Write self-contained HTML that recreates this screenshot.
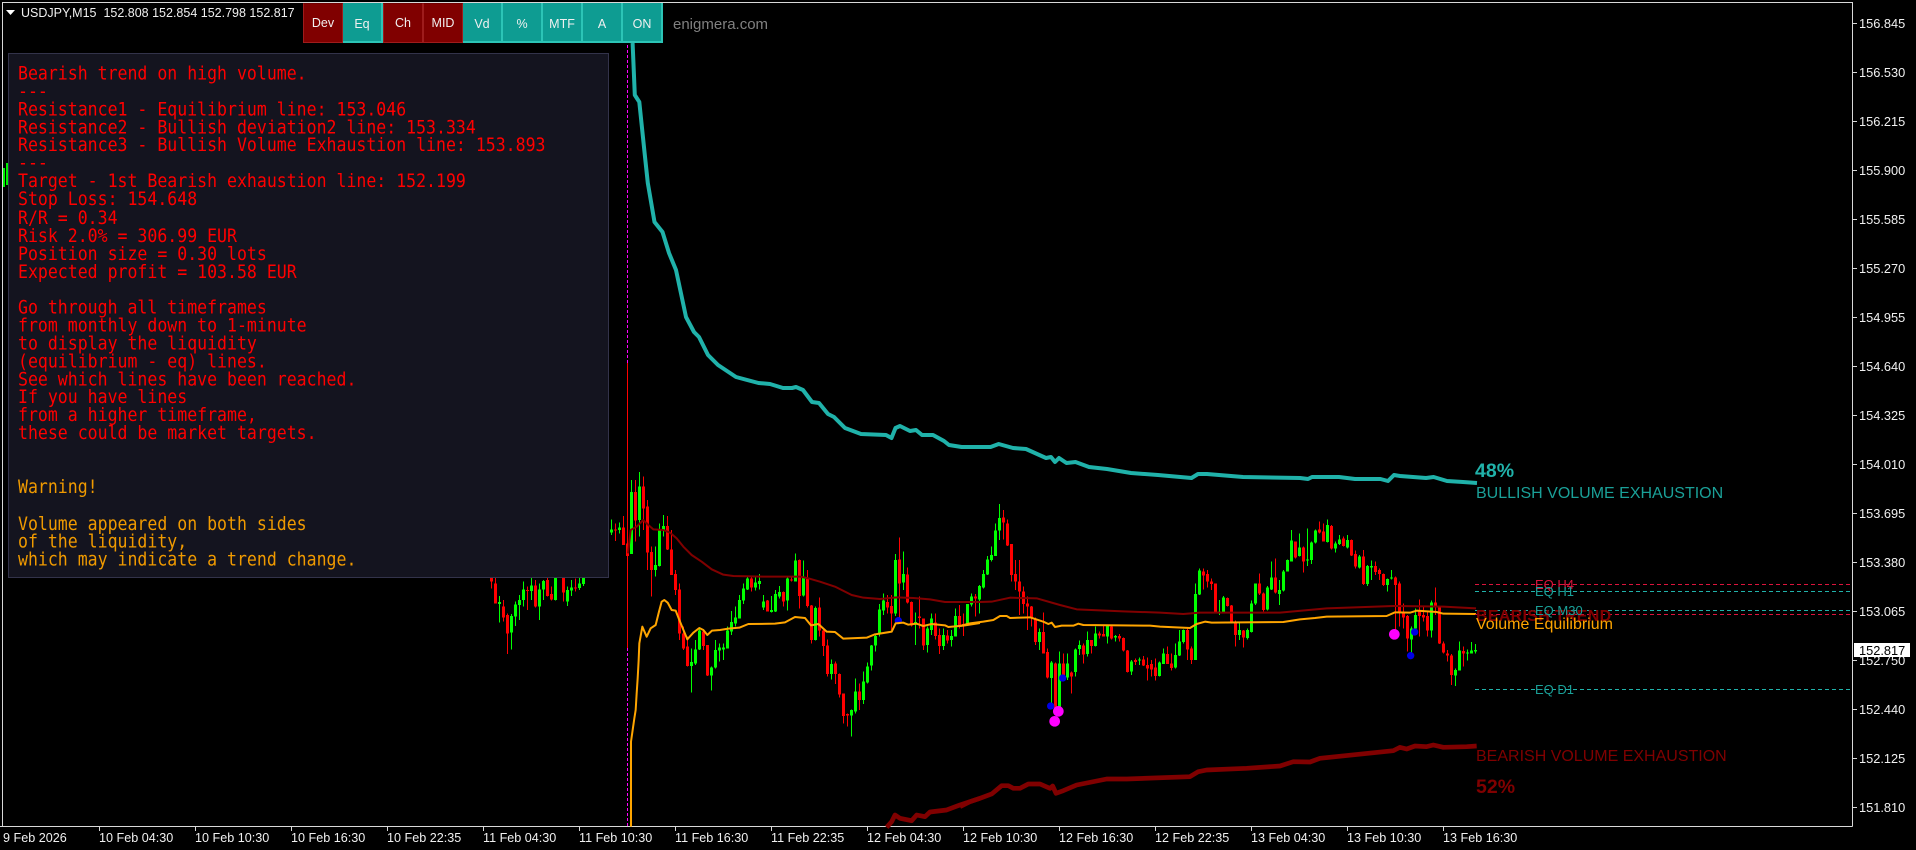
<!DOCTYPE html>
<html lang="en">
<head>
<meta charset="utf-8">
<title>USDJPY,M15</title>
<style>
html,body{margin:0;padding:0;background:#000;width:1916px;height:850px;overflow:hidden}
svg{position:absolute;left:0;top:0;display:block}
text{font-family:"Liberation Sans",Arial,sans-serif}
.ax{font-size:12.8px;fill:#f0f0f0}
.tm{font-size:12.6px;fill:#f0f0f0}
.panel{position:absolute;left:8px;top:53px;width:599px;height:523px;background:#14141f;border:1px solid #33334a;box-sizing:content-box}
.panel pre{position:absolute;left:9px;top:11px;margin:0;font:16.55px/16.07px "DejaVu Sans Mono","Liberation Mono",monospace;color:#f00;white-space:pre;transform:scaleY(1.12);transform-origin:0 0}
.panel span{color:#f09a00}
.b{position:absolute;top:3px;height:40px;width:40px;box-sizing:border-box;font:12.5px/40px "Liberation Sans",Arial,sans-serif;color:#f0f0f0;text-align:center}
.r{background:#800000;border:1px solid #9e1c1c;border-top-color:#6d0000;line-height:39px}
.g{background:#0e9c92;border-right:2px solid #2cc4b6;border-bottom:2px solid #2cc4b6;line-height:42px}
</style>
</head>
<body>
<svg width="1916" height="850" viewBox="0 0 1916 850">
<!-- frame -->
<path d="M2.5 826.5V2.5H1852.5V826.5M0 826.5H1852.5" fill="none" stroke="#d8d8d8" stroke-width="1" shape-rendering="crispEdges"/>
<!-- stub candles at the far left -->
<path d="M4 168V187M7 163V185" stroke="#0e0" stroke-width="2" shape-rendering="crispEdges"/>
<!-- vertical session line -->
<path d="M627.5 45V363M627.5 648V826" stroke="#f0f" stroke-width="1" stroke-dasharray="3 2" shape-rendering="crispEdges"/>
<path d="M627.5 363V648" stroke="#f00" stroke-width="1" shape-rendering="crispEdges"/>

<!-- candles zone A (3x coords, origin 480,480) -->
<g transform="translate(480.1667,480) scale(.33333)" shape-rendering="crispEdges" fill="none">
<path stroke="#f00" stroke-width="3" d="M34 290V325M46 290V370M70 360V425M82 400V522M142 320V390M166 300V382M202 290V350M214 320V362M250 290V365M286 295V335M406 130V183M430 108V195M442 190V228M466 0V185M490 -10V150M502 60V270M514 200V350M562 108V210M574 150V285M586 270V345M598 310V480M610 440V510M622 470V560M670 452V510M682 495V588M814 290V335M862 360V395M910 335V380M934 290V305M958 238V385M982 270V382M994 375V490M1018 352V470M1030 450V528M1042 478V590M1066 545V612M1078 580V652M1090 640V730M1102 700V740M1138 610V690M1222 345V400M1234 345V450M1258 172V415M1282 262V370M1294 365V440M1318 350V445M1330 415V510M1366 400V478M1378 445V522M1402 450V490M1438 375V445M1450 400V468M1486 342V410"/>
<path stroke="#f00" stroke-width="9" d="M34 290V305M46 310V370M70 380V412M82 405V460M142 330V333M166 316V380M202 300V348M214 342V358M250 291V338M286 322V326M406 148V151M430 142V195M442 190V228M466 36V122M490 20V85M502 80V218M514 216V270M562 138V208M574 208V285M586 282V330M598 328V460M610 460V505M622 500V558M670 455V498M682 495V586M814 295V322M862 362V395M910 336V364M934 298V302M958 240V348M982 296V378M994 376V480M1018 382V452M1030 452V498M1042 496V582M1066 550V582M1078 582V644M1090 640V708M1102 702V706M1138 634V660M1222 366V382M1234 378V400M1258 238V310M1282 283V368M1294 366V436M1318 410V414M1330 416V496M1366 428V468M1378 465V498M1402 467V482M1438 408V438M1450 432V436M1486 350V355"/>
<path stroke="#0f0" stroke-width="3" d="M58 348V428M94 402V508M106 365V438M118 345V420M130 305V380M154 290V360M178 310V420M190 300V360M226 290V362M262 320V378M274 300V348M298 290V330M310 290V318M394 118V165M418 128V160M454 0V222M478 -24V170M526 200V290M538 130V260M550 105V170M634 505V638M646 480V555M658 442V510M694 560V632M706 480V565M718 490V545M730 490V540M742 440V505M754 393V465M766 380V440M778 345V415M790 310V372M802 290V330M826 290V332M838 282V328M850 345V390M874 348V398M886 330V396M898 318V355M922 292V392M946 220V305M970 242V350M1006 380V482M1054 538V598M1114 688V770M1126 595V700M1150 575V672M1162 548V610M1174 495V572M1186 460V515M1198 372V470M1210 340V405M1246 222V408M1270 215V330M1306 398V495M1342 440V518M1354 400V465M1390 445V510M1414 450V500M1426 385V470M1462 372V435M1474 340V380M1498 315V400"/>
<path stroke="#0f0" stroke-width="9" d="M58 366V372M94 408V458M106 373V410M118 360V375M130 328V360M154 316V333M178 328V380M190 303V328M226 291V360M262 330V365M274 322V332M298 310V324M310 292V312M394 148V158M418 142V150M454 36V222M478 20V120M526 255V270M538 152V258M550 138V150M634 546V558M646 508V550M658 452V508M694 562V586M706 510V563M718 503V512M730 502V508M742 452V505M754 426V455M766 412V430M778 360V415M790 326V362M802 296V328M826 308V322M838 303V312M850 365V383M874 390V396M886 342V394M898 336V350M922 296V362M946 242V305M970 290V346M1006 384V480M1054 552V582M1114 690V707M1126 634V694M1150 604V660M1162 560V608M1174 496V556M1186 468V496M1198 388V462M1210 362V392M1246 240V400M1270 282V308M1306 426V434M1342 445V495M1354 415V450M1390 465V498M1414 468V480M1426 408V470M1462 372V433M1474 350V374M1498 318V358"/>
</g>
<!-- candles zone B (3x coords, origin 960,480) -->
<g transform="translate(960.1667,480) scale(.33333)" shape-rendering="crispEdges" fill="none">
<path stroke="#f00" stroke-width="3" d="M130 90V178M142 118V198M154 192V305M166 240V330M178 240V405M190 320V400M202 350V450M214 378V440M226 412V495M250 398V520M262 505V595M286 548V695M310 520V600M334 575V640M370 490V550M394 480V520M418 455V475M430 438V470M454 438V478M478 462V485M490 473V515M502 510V578M526 535V555M550 528V558M562 532V602M574 540V590M586 535V602M622 500V552M634 520V572M682 445V540M694 500V552M730 265V328M742 270V322M754 295V330M766 310V400M802 352V380M814 375V430M826 422V500M850 450V503M898 280V345M910 338V395M946 235V340M1006 185V235M1030 200V278M1078 125V160M1090 130V185M1114 135V208M1150 170V200M1174 178V228M1186 212V265M1210 210V315M1246 245V285M1258 265V300M1270 280V318M1306 290V450M1318 305V440M1330 370V445M1342 405V515M1378 358V470M1390 380V425M1402 395V470M1426 322V405M1438 378V492M1450 485V520M1462 510V545M1474 522V615M1510 500V560"/>
<path stroke="#f00" stroke-width="9" d="M130 112V128M142 130V196M154 192V285M166 282V305M178 304V335M190 334V372M202 370V380M214 380V412M226 415V486M250 456V520M262 516V593M286 550V690M310 550V590M334 578V590M370 497V524M394 480V498M418 460V466M430 462V470M454 440V476M478 468V476M490 474V512M502 511V576M526 540V546M550 538V556M562 555V566M574 552V568M586 562V588M622 522V552M634 550V564M682 450V508M694 505V540M730 274V286M742 282V305M754 304V312M766 310V396M802 354V378M814 376V428M826 424V465M850 452V472M898 310V340M910 340V390M946 292V338M1006 184V232M1030 202V245M1078 148V158M1090 155V185M1114 138V206M1150 175V198M1174 180V226M1186 222V260M1210 230V312M1246 258V276M1258 270V282M1270 282V315M1306 292V315M1318 310V395M1330 395V412M1342 408V476M1378 395V408M1390 405V412M1402 408V452M1426 368V378M1438 378V490M1450 490V518M1462 520V526M1474 526V585M1510 513V520"/>
<path stroke="#0f0" stroke-width="3" d="M70 270V325M82 228V285M94 200V245M106 130V228M118 72V180M238 445V510M274 543V670M298 515V695M322 520V600M346 506V590M358 482V525M382 455V530M406 440V500M442 435V490M466 465V485M514 540V585M538 532V555M598 545V590M610 505V552M646 490V565M658 450V528M670 448V490M706 310V540M718 265V345M778 360V405M790 348V398M838 425V480M862 445V478M874 362V458M886 310V375M922 318V392M934 245V330M958 300V375M970 270V335M982 238V275M994 150V245M1018 160V230M1042 145V258M1054 185V252M1066 148V190M1102 118V188M1126 185V218M1138 165V195M1162 165V205M1198 225V265M1222 255V318M1234 242V300M1282 295V335M1294 270V298M1354 440V525M1366 385V445M1414 362V472M1486 565V618M1498 485V572M1522 508V542M1534 486V520M1546 492V520"/>
<path stroke="#0f0" stroke-width="9" d="M70 282V322M82 238V284M94 225V240M106 152V228M118 114V152M238 456V486M274 548V594M298 550V690M322 550V592M346 508V576M358 495V507M382 480V522M406 460V498M442 438V470M466 468V472M514 545V574M538 538V542M598 548V588M610 520V552M646 525V563M658 484V526M670 450V486M706 342V540M718 272V344M778 395V400M790 353V396M838 450V465M862 450V474M874 370V456M886 310V370M922 322V388M934 292V328M958 330V342M970 274V332M982 240V274M994 182V244M1018 202V228M1042 238V242M1054 188V240M1066 152V188M1102 135V186M1126 190V206M1138 178V192M1162 180V202M1198 230V262M1222 258V312M1234 258V262M1282 297V315M1294 292V296M1354 445V478M1366 405V445M1414 368V452M1486 570V586M1498 512V572M1522 517V520M1534 512V520M1546 510V515"/>
</g>

<!-- teal exhaustion line -->
<polyline fill="none" stroke="#20b2aa" stroke-width="4" stroke-linejoin="round" points="632.6,43 634.8,95 639.3,102 644.6,153 647.8,183 654.5,222 662.5,232 669,253 676,270 686,317 694,332 699,337 708,355 718,365 736,377 758.5,383 770,384 783,388 792,388 796,387 803,390 812,402 819,403 828,414 834,417 845,428 861,434 886,435 891.5,438 895.5,428 900,426 910,431 916,430 922,435 933,435 944,441 949,445 961.6,447 990.6,447 998.7,444 1013,448 1026,449 1046,458 1051,457 1055,462 1059,458 1066.5,463 1075.5,462 1089,467 1107,469 1131,473 1158,475 1191.5,478 1198,474 1207,474 1243,477 1300,478 1308,479 1312,477 1339,477 1355,479 1380.5,479 1388,481 1394,475 1400,476 1426,478 1433.6,477 1447,481 1463,482 1477,483"/>

<!-- zone A overlays -->
<g transform="translate(480,480) scale(.33333)" fill="none" stroke-linejoin="round">
<circle cx="1255" cy="422" r="11" fill="#0000e6"/>
<polyline stroke="#800000" stroke-width="6" points="444,220 452,150 470,140 490,120 505,135 520,148 550,150 570,158 590,175 610,200 635,225 665,245 695,268 730,284 760,288 850,290 960,290 985,295 1020,305 1065,320 1115,345 1150,353 1200,357 1250,352 1300,354 1350,358 1395,366 1500,366"/>
<polyline stroke="#ffa500" stroke-width="6" points="453,1040 453,785 458,750 463,715 467,690 470,640 473,595 476,540 478,490 487,440 500,470 512,445 527,435 537,395 545,365 553,360 563,368 575,390 587,392 600,425 622,478 640,458 658,444 670,450 682,465 696,452 720,450 745,446 778,443 805,432 885,431 915,427 945,411 975,414 993,436 1015,432 1040,455 1065,456 1090,476 1160,473 1185,463 1235,455 1247,430 1270,428 1285,434 1310,431 1330,438 1355,432 1395,436 1405,441 1450,437 1500,429"/>
<polyline stroke="#800000" stroke-width="14" points="1220,1042 1235,1025 1245,1005 1260,1015 1295,1022 1310,1005 1335,1010 1350,996 1400,990 1440,975 1500,955"/>
</g>
<!-- zone B overlays -->
<g transform="translate(960,480) scale(.33333)" fill="none" stroke-linejoin="round">
<circle cx="272" cy="678" r="11" fill="#0000e6"/>
<circle cx="308" cy="594" r="11" fill="#0000e6"/>
<circle cx="1352" cy="527" r="11" fill="#0000e6"/>
<circle cx="1364" cy="456" r="11" fill="#0000e6"/>
<polyline stroke="#800000" stroke-width="6" points="0,366 60,366 95,365 150,353 230,355 300,375 350,388 490,394 600,398 670,402 720,398 960,398 1100,385 1300,378 1450,380 1548,385"/>
<polyline stroke="#ffa500" stroke-width="6" points="0,438 30,430 70,425 100,420 120,408 140,408 150,414 210,412 250,425 265,432 275,428 285,441 305,437 340,437 355,431 370,435 570,437 600,440 690,444 710,432 735,425 755,428 970,426 1020,418 1065,414 1100,410 1280,408 1305,397 1350,398 1370,392 1430,396 1450,401 1548,402"/>
<polyline stroke="#800000" stroke-width="14" points="0,980 30,965 60,955 95,942 125,917 145,917 160,925 180,925 205,912 240,912 270,925 278,918 288,940 310,932 350,915 440,897 500,897 690,890 715,875 740,870 860,865 960,858 1000,845 1050,846 1080,835 1300,812 1320,802 1340,807 1365,798 1400,800 1420,795 1450,802 1520,800 1550,798"/>
<circle cx="295" cy="694" r="16" fill="#f0f"/>
<circle cx="284" cy="724" r="16" fill="#f0f"/>
<circle cx="1303" cy="463" r="16" fill="#f0f"/>
</g>

<!-- EQ dashed lines -->
<g shape-rendering="crispEdges" stroke-width="1" stroke-dasharray="4 3" fill="none">
<path stroke="#dc143c" d="M1475 584.5H1851M1475 614.5H1851"/>
<path stroke="#20b2aa" d="M1475 591.5H1851M1475 610.5H1851M1475 689.5H1851"/>
</g>
<!-- labels -->
<text x="1476" y="621" font-size="16" font-weight="700" fill="#800000" style="letter-spacing:.3px">BEARISH TREND</text>
<text x="1535" y="589" font-size="13" fill="#dc143c">EQ H4</text>
<text x="1535" y="596" font-size="13" fill="#1aa098">EQ H1</text>
<text x="1535" y="615" font-size="13" fill="#1aa098">EQ M30</text>
<text x="1535" y="694" font-size="13" fill="#1aa098">EQ D1</text>
<text x="1476" y="629" font-size="16" fill="#ffa500">Volume Equilibrium</text>
<text x="1475" y="477" font-size="19.5" font-weight="700" fill="#20b2aa">48%</text>
<text x="1476" y="498" font-size="16" fill="#1aa098">BULLISH VOLUME EXHAUSTION</text>
<text x="1476" y="761" font-size="16" fill="#800000">BEARISH VOLUME EXHAUSTION</text>
<text x="1476" y="793" font-size="19.5" font-weight="700" fill="#800000">52%</text>

<!-- price axis -->
<path stroke="#d8d8d8" stroke-width="1" shape-rendering="crispEdges" d="M1853 23.5h4M1853 72.5h4M1853 121.5h4M1853 170.5h4M1853 219.5h4M1853 268.5h4M1853 317.5h4M1853 366.5h4M1853 415.5h4M1853 464.5h4M1853 513.5h4M1853 562.5h4M1853 611.5h4M1853 660.5h4M1853 709.5h4M1853 758.5h4M1853 807.5h4"/>
<text class="ax" x="1859" y="28">156.845</text>
<text class="ax" x="1859" y="77">156.530</text>
<text class="ax" x="1859" y="126">156.215</text>
<text class="ax" x="1859" y="175">155.900</text>
<text class="ax" x="1859" y="224">155.585</text>
<text class="ax" x="1859" y="273">155.270</text>
<text class="ax" x="1859" y="322">154.955</text>
<text class="ax" x="1859" y="371">154.640</text>
<text class="ax" x="1859" y="420">154.325</text>
<text class="ax" x="1859" y="469">154.010</text>
<text class="ax" x="1859" y="518">153.695</text>
<text class="ax" x="1859" y="567">153.380</text>
<text class="ax" x="1859" y="616">153.065</text>
<text class="ax" x="1859" y="665">152.750</text>
<text class="ax" x="1859" y="714">152.440</text>
<text class="ax" x="1859" y="763">152.125</text>
<text class="ax" x="1859" y="812">151.810</text>
<rect x="1854" y="643" width="56" height="14" fill="#fff"/>
<text x="1859" y="655" font-size="12.8" fill="#000">152.817</text>

<!-- time axis -->
<path stroke="#d8d8d8" stroke-width="1" shape-rendering="crispEdges" d="M99.5 827v4M195.5 827v4M291.5 827v4M387.5 827v4M483.5 827v4M579.5 827v4M675.5 827v4M771.5 827v4M867.5 827v4M963.5 827v4M1059.5 827v4M1155.5 827v4M1251.5 827v4M1347.5 827v4M1443.5 827v4"/>
<text class="tm" x="3" y="842">9 Feb 2026</text>
<text class="tm" x="99" y="842">10 Feb 04:30</text>
<text class="tm" x="195" y="842">10 Feb 10:30</text>
<text class="tm" x="291" y="842">10 Feb 16:30</text>
<text class="tm" x="387" y="842">10 Feb 22:35</text>
<text class="tm" x="483" y="842">11 Feb 04:30</text>
<text class="tm" x="579" y="842">11 Feb 10:30</text>
<text class="tm" x="675" y="842">11 Feb 16:30</text>
<text class="tm" x="771" y="842">11 Feb 22:35</text>
<text class="tm" x="867" y="842">12 Feb 04:30</text>
<text class="tm" x="963" y="842">12 Feb 10:30</text>
<text class="tm" x="1059" y="842">12 Feb 16:30</text>
<text class="tm" x="1155" y="842">12 Feb 22:35</text>
<text class="tm" x="1251" y="842">13 Feb 04:30</text>
<text class="tm" x="1347" y="842">13 Feb 10:30</text>
<text class="tm" x="1443" y="842">13 Feb 16:30</text>

<!-- header -->
<path d="M6 10H15L10.5 15Z" fill="#fff"/>
<text x="21" y="17" fill="#f0f0f0" style="font-size:12.5px;white-space:pre">USDJPY,M15  152.808 152.854 152.798 152.817</text>
<text x="673" y="29" font-size="15" fill="#808080">enigmera.com</text>
</svg>

<div class="panel"><pre>Bearish trend on high volume.
---
Resistance1 - Equilibrium line: 153.046
Resistance2 - Bullish deviation2 line: 153.334
Resistance3 - Bullish Volume Exhaustion line: 153.893
---
Target - 1st Bearish exhaustion line: 152.199
Stop Loss: 154.648
R/R = 0.34
Risk 2.0% = 306.99 EUR
Position size = 0.30 lots
Expected profit = 103.58 EUR

Go through all timeframes
from monthly down to 1-minute
to display the liquidity
(equilibrium - eq) lines.
See which lines have been reached.
If you have lines
from a higher timeframe,
these could be market targets.


<span>Warning!

Volume appeared on both sides
of the liquidity,
which may indicate a trend change.</span></pre></div>

<div class="b r" style="left:303px">Dev</div>
<div class="b g" style="left:343px">Eq</div>
<div class="b r" style="left:383px">Ch</div>
<div class="b r" style="left:423px">MID</div>
<div class="b g" style="left:463px">Vd</div>
<div class="b g" style="left:503px">%</div>
<div class="b g" style="left:543px">MTF</div>
<div class="b g" style="left:583px">A</div>
<div class="b g" style="left:623px">ON</div>
</body>
</html>
